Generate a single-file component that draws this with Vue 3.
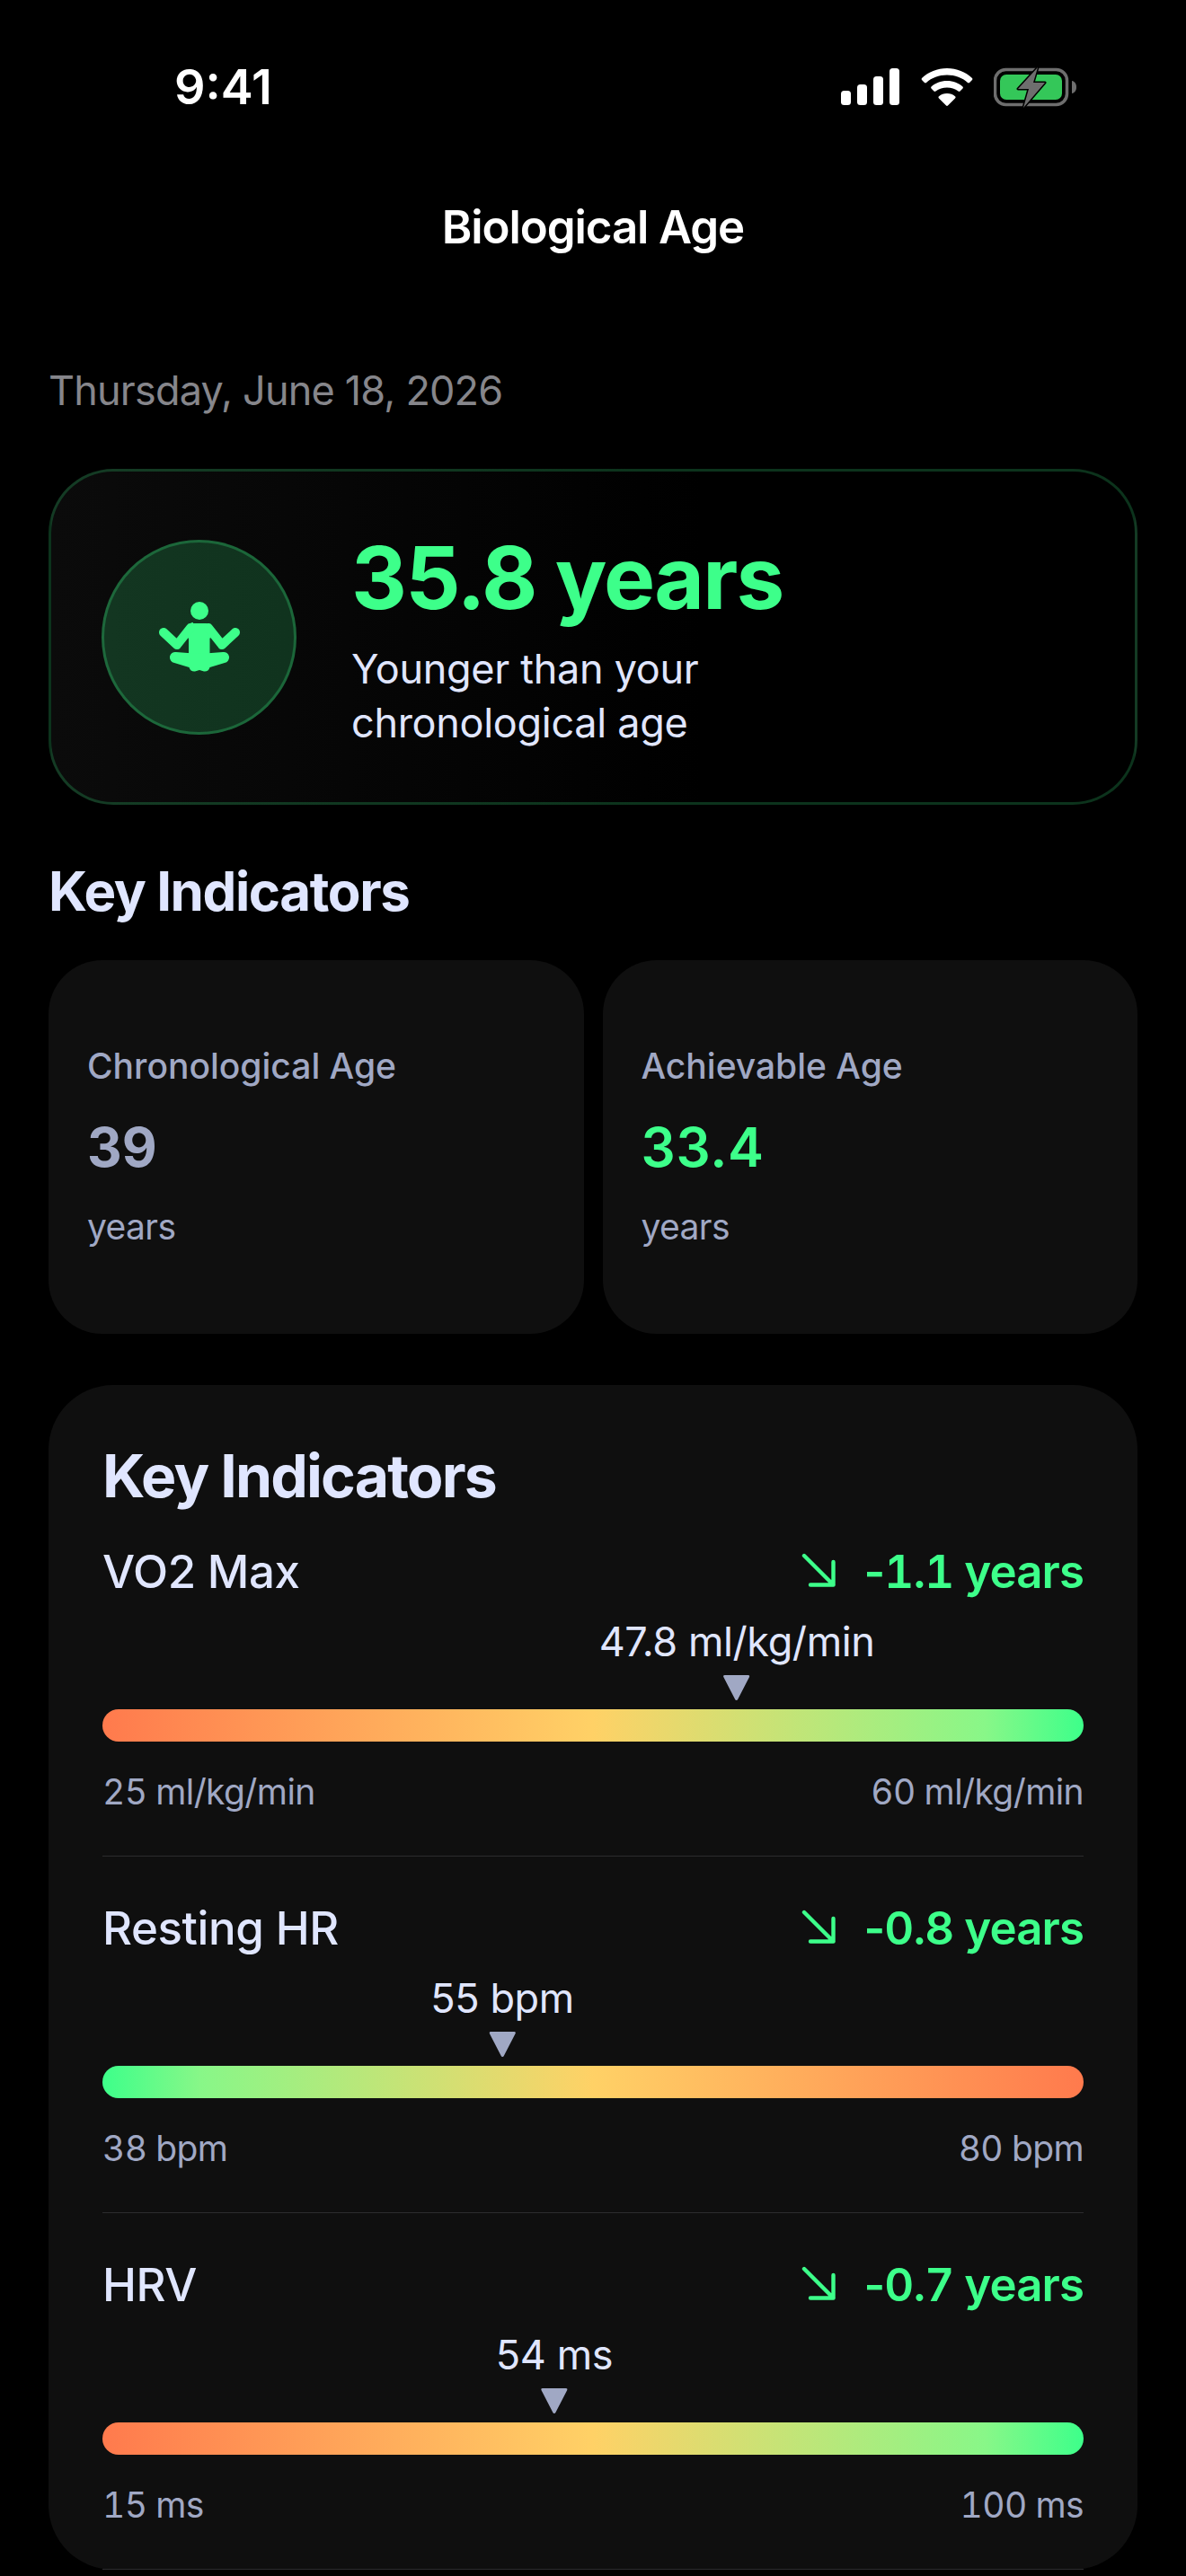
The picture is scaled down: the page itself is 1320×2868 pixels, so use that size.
<template>
  <div class="screen">
    <div class="status-bar">
      <span class="time">9:41</span>
      <div class="status-icons">
        <svg class="signal" width="66" height="42" viewBox="0 0 66 42" fill="#fff">
          <rect x="0" y="25" width="11" height="16" rx="3.5" />
          <rect x="18" y="18" width="11" height="23" rx="3.5" />
          <rect x="36" y="9" width="11" height="32" rx="3.5" />
          <rect x="54" y="0" width="11" height="41" rx="3.5" />
        </svg>
        <svg class="wifi" width="58" height="42" viewBox="0 0 58 42" fill="#fff">
          <path d="M29 0C18 0 8.500 4 1 11a1.500 1.500 0 0 0 0 2l3 3a1.500 1.500 0 0 0 2 0C12 10.500 20 7.500 29 7.500S46 10.500 52 16a1.500 1.500 0 0 0 2 0l3-3a1.500 1.500 0 0 0 0-2C49.500 4 40 0 29 0Z" />
          <path d="M29 14c-7 0-13 2.500-17.500 6.500a1.500 1.500 0 0 0 0 2l3 3a1.500 1.500 0 0 0 2 0C20 23 24.500 21.500 29 21.500S38 23 41.500 25.500a1.500 1.500 0 0 0 2 0l3-3a1.500 1.500 0 0 0 0-2C42 16.500 36 14 29 14Z" />
          <path d="M29 28c-3.500 0-6.500 1.200-9 3.200a1.500 1.500 0 0 0 0 2.200l7.800 7.900a1.600 1.600 0 0 0 2.400 0l7.800-7.900a1.500 1.500 0 0 0 0-2.200C35.500 29.200 32.500 28 29 28Z" />
        </svg>
        <svg class="battery" width="92" height="46" viewBox="0 0 92 46">
          <rect x="1.500" y="3.500" width="80" height="39" rx="12" fill="none" stroke="#6e6e6e" stroke-width="3.500" />
          <rect x="7" y="9" width="69" height="28" rx="7" fill="#34c759" />
          <path d="M87 16c3 .5 5 3 5 7s-2 6.500-5 7Z" fill="#6e6e6e" />
          <path d="M49 1 27 25h12l-6 21 24-28H44Z" fill="#6e6e6e" stroke="#000" stroke-width="3" stroke-linejoin="round" paint-order="stroke" />
        </svg>
      </div>
    </div>

    <h1 class="nav-title">Biological Age</h1>

    <main class="content">
      <p class="date">Thursday, June 18, 2026</p>

      <section class="hero">
        <div class="hero-circle">
          <svg width="100" height="100" viewBox="0 0 100 100" fill="#3dff8a">
            <circle cx="50" cy="21" r="10" />
            <path d="M43 35h14c2.500 0 4.500 1 6 3l3 4v0l-4 10-.500-1V78H38V51l-.5 1-4-10 3-4c1.500-2 4-4 6.500-4Z" />
            <path d="M10 45 25 59 40 40M90 45 75 59 60 40" fill="none" stroke="#3dff8a" stroke-width="10" stroke-linecap="round" stroke-linejoin="round" />
            <path d="M24 67 50 69 76 67A6 6 0 0 1 78 79L61.500 84Q60 89 55 88.500L50 87 45 88.500Q40 89 38.500 84L22 79A6 6 0 0 1 24 67Z" />
          </svg>
        </div>
        <div class="hero-text">
          <div class="hero-value">35.8 years</div>
          <div class="hero-sub">Younger than your<br />chronological age</div>
        </div>
      </section>

      <h2 class="section-title">Key Indicators</h2>

      <div class="age-cards">
        <div class="age-card">
          <div class="age-label">Chronological Age</div>
          <div class="age-value">39</div>
          <div class="age-unit">years</div>
        </div>
        <div class="age-card">
          <div class="age-label">Achievable Age</div>
          <div class="age-value green">33.4</div>
          <div class="age-unit">years</div>
        </div>
      </div>

      <section class="panel">
        <h2 class="panel-title">Key Indicators</h2>
        <div class="indicator" v-for="item in indicators" :key="item.name">
          <div class="indicator-head">
            <span class="indicator-name">{{ item.name }}</span>
            <span class="indicator-delta">
              <svg width="40" height="40" viewBox="0 0 40 40" fill="none" stroke="#3dff8a" stroke-width="4.400" stroke-linecap="round" stroke-linejoin="round">
                <path d="M3 3 35.500 35.500M10 35.500H35.500V10" />
              </svg>
              <span>-<span class="tnum">{{ item.delta }}</span> years</span>
            </span>
          </div>
          <div class="marker-zone">
            <div class="marker" :style="{ left: item.pos + 'px' }">
              <span class="marker-value">{{ item.value }}</span>
              <svg width="30" height="30" viewBox="0 0 30 30" fill="#a0a8c4">
                <path d="M2 1h26a1.500 1.500 0 0 1 1.400 2L16.500 28a1.600 1.600 0 0 1-3 0L.6 3A1.500 1.500 0 0 1 2 1Z" />
              </svg>
            </div>
          </div>
          <div class="bar" :class="{ reverse: item.reverse }"></div>
          <div class="range">
            <span>{{ item.min }}</span>
            <span>{{ item.max }}</span>
          </div>
        </div>
      </section>
    </main>
  </div>
</template>

<script setup>
const indicators = [
  { name: 'VO2 Max', delta: '1.1', value: '47.8 ml/kg/min', min: '25 ml/kg/min', max: '60 ml/kg/min', pos: 706 },
  { name: 'Resting HR', delta: '0.8', value: '55 bpm', min: '38 bpm', max: '80 bpm', pos: 445, reverse: true },
  { name: 'HRV', delta: '0.7', value: '54 ms', min: '15 ms', max: '100 ms', pos: 503 },
]
</script>

<style>
html, body {
  margin: 0;
  background: #000;
}
</style>

<style scoped>
.screen {
  width: 1320px;
  height: 2868px;
  overflow: hidden;
  background: #000;
  color: #e0e6ff;
  font-family: Inter, "Liberation Sans", sans-serif;
}

.status-bar {
  height: 194px;
  box-sizing: border-box;
  padding: 66px 122px 0 194px;
  display: flex;
  justify-content: space-between;
  align-items: flex-start;
}
.time {
  font-size: 54px;
  line-height: 62px;
  font-weight: 600;
  color: #fff;
}
.status-icons {
  display: flex;
  align-items: flex-start;
  gap: 23px;
  padding-top: 10px;
}
.battery {
  margin-top: -2px;
}

.nav-title {
  margin: 0;
  height: 118px;
  line-height: 118px;
  text-align: center;
  font-size: 51px;
  font-weight: 600;
  letter-spacing: -1.1px;
  color: #fff;
}

.content {
  padding: 0 54px;
}
.date {
  margin: 90px 0 0;
  line-height: 66px;
  font-size: 45px;
  letter-spacing: -0.8px;
  color: #86868b;
}

.hero {
  margin-top: 54px;
  height: 374px;
  box-sizing: border-box;
  border: 3px solid rgba(61, 255, 138, 0.2);
  border-radius: 72px;
  background: linear-gradient(90deg, #0b0b0b, #000 60%);
  display: flex;
  align-items: center;
  gap: 61px;
  padding-left: 56px;
}
.hero-circle {
  width: 217px;
  height: 217px;
  box-sizing: border-box;
  border-radius: 50%;
  background: rgba(61, 255, 138, 0.18);
  border: 3px solid rgba(61, 255, 138, 0.25);
  display: flex;
  align-items: center;
  justify-content: center;
}
.hero-text {
  padding-top: 5px;
}
.hero-value {
  font-size: 96px;
  line-height: 110px;
  font-weight: 700;
  letter-spacing: -1.8px;
  color: #3dff8a;
}
.hero-sub {
  margin-top: 17px;
  font-size: 45px;
  line-height: 60px;
  letter-spacing: -0.3px;
  color: #e0e6ff;
}

.section-title {
  margin: 63px 0 0;
  line-height: 66px;
  font-size: 60px;
  font-weight: 700;
  letter-spacing: -1.4px;
}

.age-cards {
  margin-top: 44px;
  display: grid;
  grid-template-columns: 1fr 1fr;
  gap: 21px;
}
.age-card {
  height: 416px;
  box-sizing: border-box;
  background: #0f0f0f;
  border-radius: 60px;
  padding: 93px 43px 0;
  color: #a0a8c4;
}
.age-label {
  font-size: 39px;
  line-height: 50px;
  font-weight: 500;
}
.age-value {
  margin-top: 29px;
  font-size: 60px;
  line-height: 72px;
  font-weight: 700;
}
.age-value.green {
  color: #3dff8a;
  font-weight: 600;
  letter-spacing: 0.8px;
}
.age-unit {
  margin-top: 28px;
  font-size: 39px;
  line-height: 50px;
  letter-spacing: -0.6px;
}

.panel {
  margin-top: 57px;
  background: #0f0f0f;
  border-radius: 72px;
  padding: 60px 60px 0;
}
.panel-title {
  margin: 0 0 35px;
  font-size: 66px;
  line-height: 82px;
  font-weight: 700;
  letter-spacing: -1.8px;
}
.indicator {
  padding: 49px 0 46px;
  border-bottom: 1px solid #2c2c2e;
}
.indicator:first-of-type {
  padding-top: 0;
}
.indicator-head {
  display: flex;
  justify-content: space-between;
  align-items: center;
  height: 60px;
  font-size: 51px;
  font-weight: 500;
  letter-spacing: -0.4px;
}
.indicator-delta {
  display: flex;
  align-items: center;
  gap: 29px;
  color: #3dff8a;
  font-weight: 600;
  letter-spacing: -0.9px;
}
.tnum {
  font-variant-numeric: tabular-nums;
}
.marker-zone {
  position: relative;
  height: 124px;
}
.marker {
  position: absolute;
  top: 19px;
  display: flex;
  flex-direction: column;
  align-items: center;
  transform: translateX(-50%);
}
.marker-value {
  font-size: 45px;
  line-height: 60px;
  letter-spacing: -0.4px;
  white-space: nowrap;
  margin-bottom: 6px;
}
.bar {
  height: 36px;
  border-radius: 18px;
  background: linear-gradient(90deg, #ff7a4d, #ffd166 50%, #88f788 90%, #3dff8a);
}
.bar.reverse {
  background: linear-gradient(90deg, #3dff8a, #88f788 10%, #ffd166 50%, #ff7a4d);
}
.range {
  margin-top: 31px;
  display: flex;
  justify-content: space-between;
  font-size: 39px;
  line-height: 50px;
  font-variant-numeric: tabular-nums;
  letter-spacing: -0.6px;
  color: #a0a8c4;
}
</style>
